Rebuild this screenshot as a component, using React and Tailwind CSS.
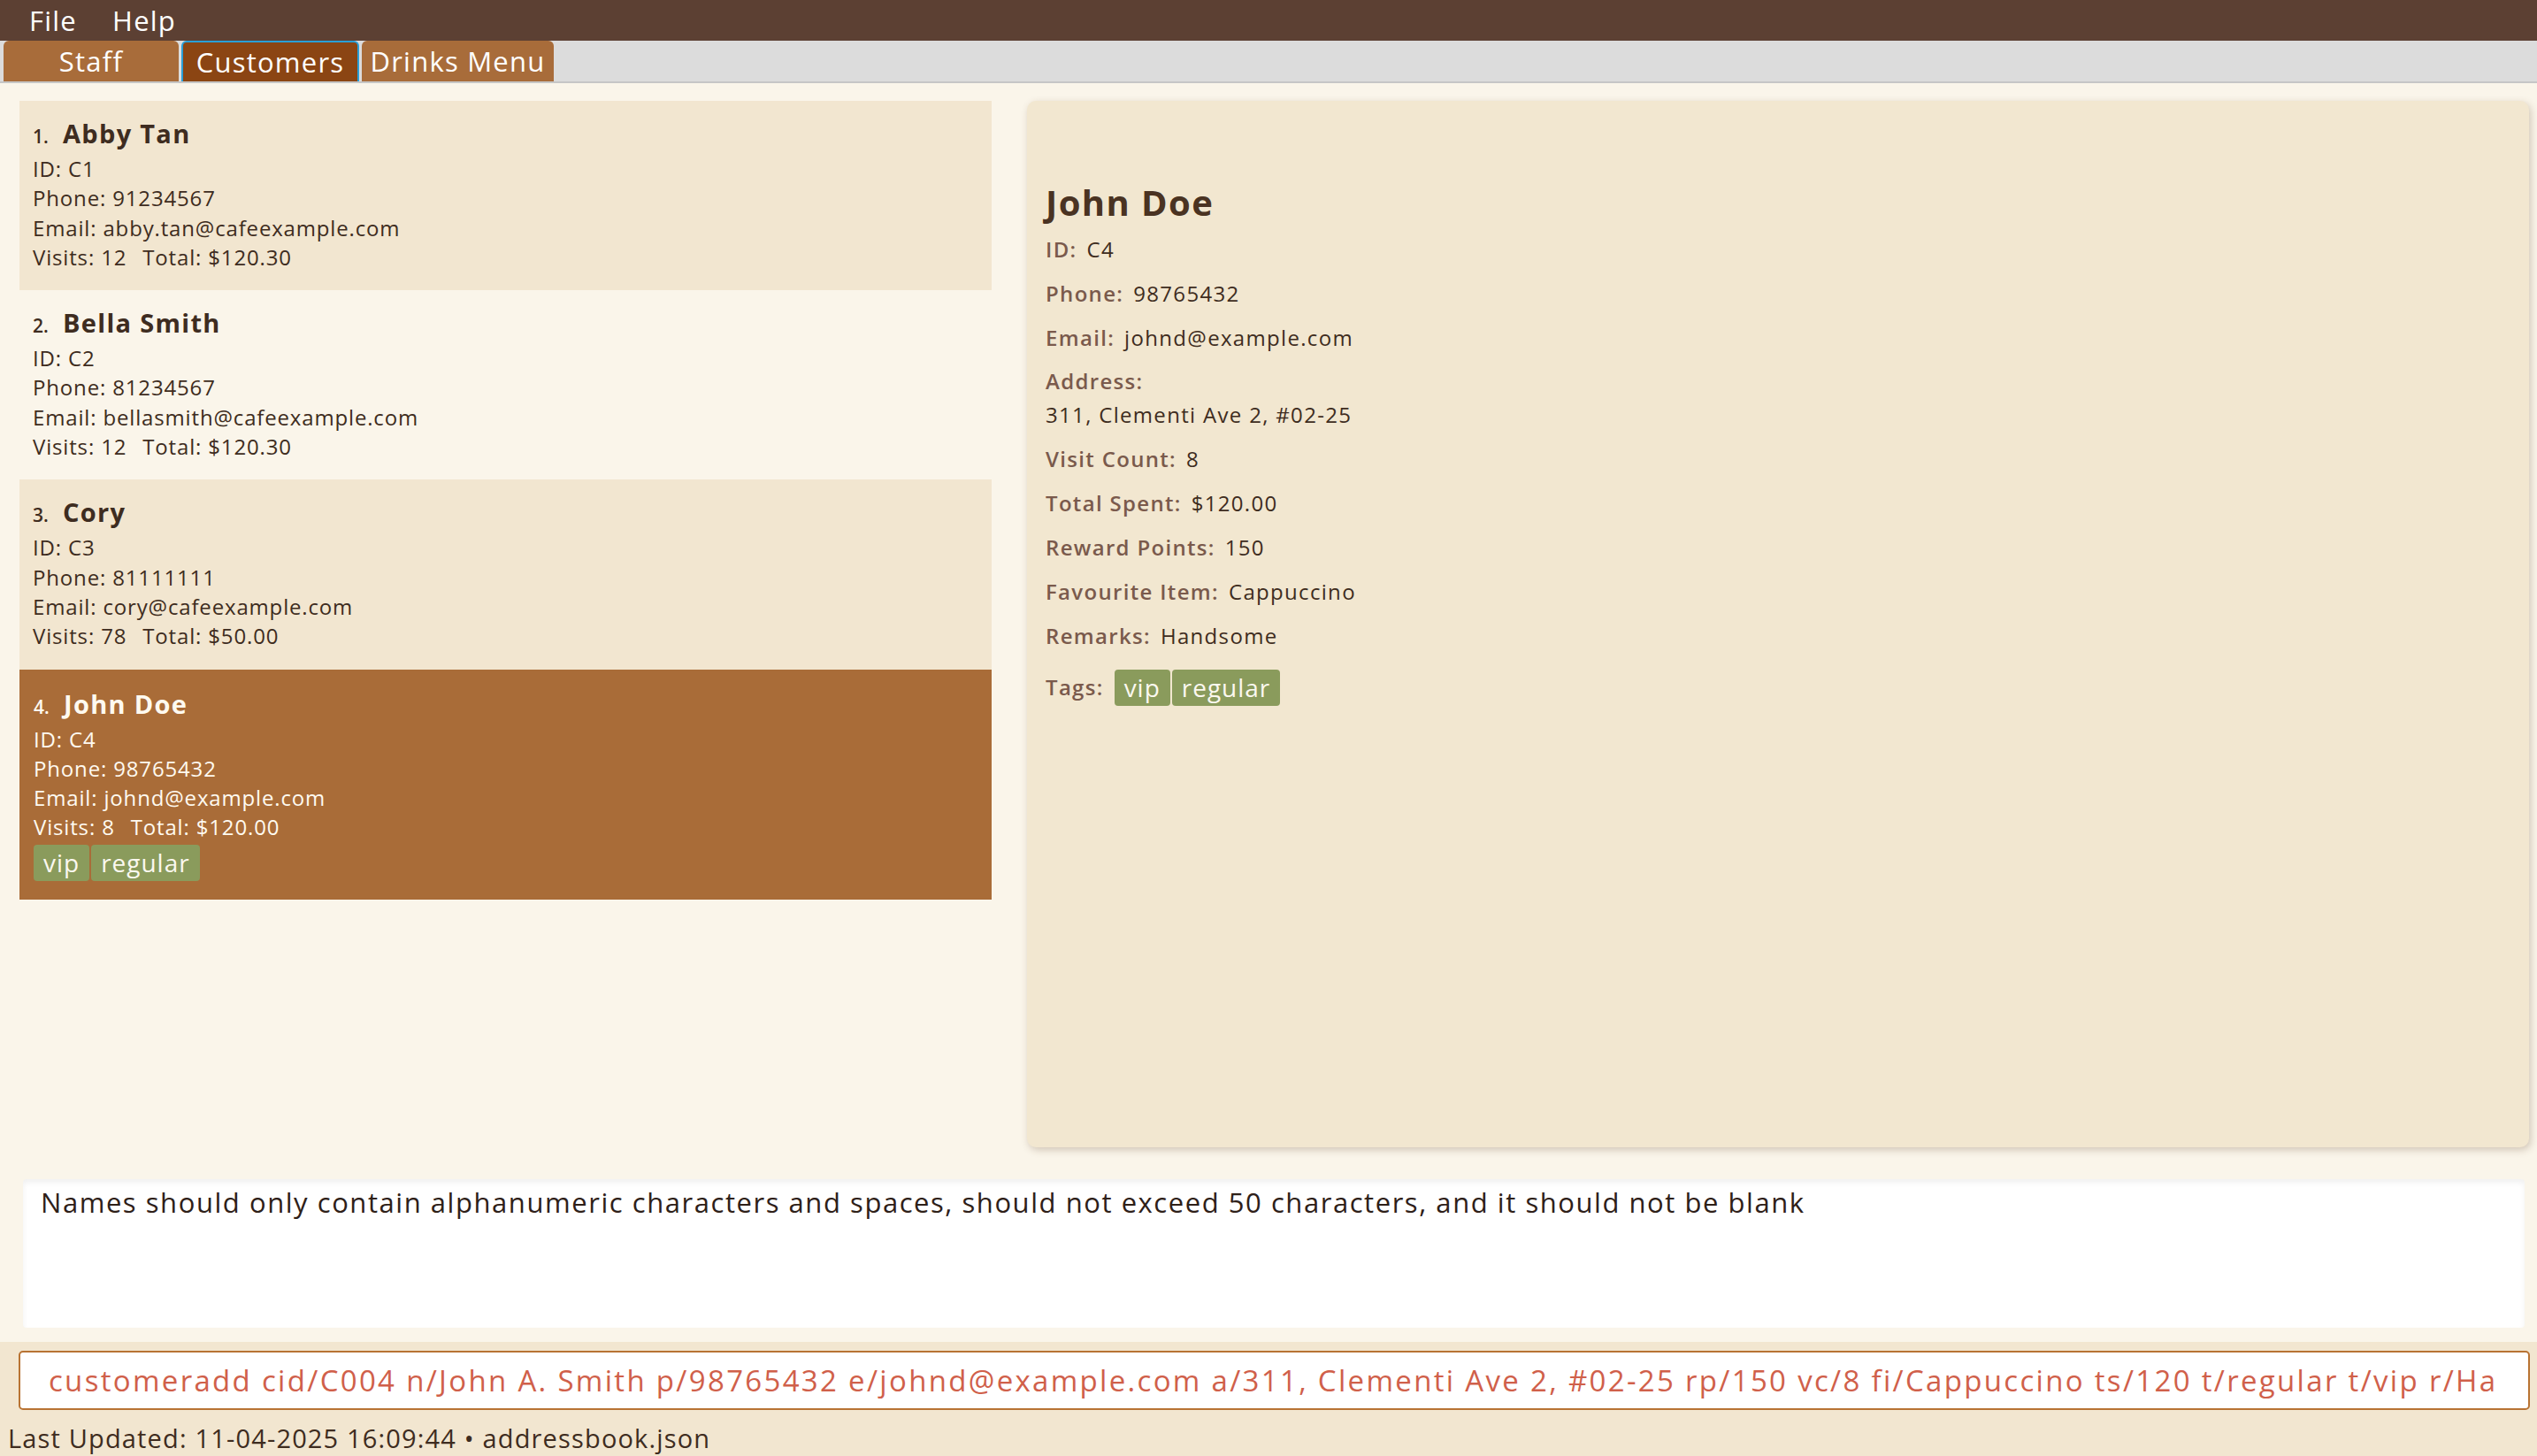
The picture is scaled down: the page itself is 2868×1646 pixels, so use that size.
const customers = [
  { no: 1, name: 'Abby Tan', id: 'C1', phone: '91234567', email: 'abby.tan@cafeexample.com', visits: 12, total: '120.30', tags: [] },
  { no: 2, name: 'Bella Smith', id: 'C2', phone: '81234567', email: 'bellasmith@cafeexample.com', visits: 12, total: '120.30', tags: [] },
  { no: 3, name: 'Cory', id: 'C3', phone: '81111111', email: 'cory@cafeexample.com', visits: 78, total: '50.00', tags: [] },
  { no: 4, name: 'John Doe', id: 'C4', phone: '98765432', email: 'johnd@example.com', visits: 8, total: '120.00', tags: ['vip', 'regular'] },
];

const selectedIndex = 3;

function Tag({ label }) {
  return (
    <span className="h-[41px] px-[11px] flex items-center rounded-[4px] bg-[#8a9b5c] text-[#fbf8ef] text-[28px] tracking-[0.035em] leading-none">
      {label}
    </span>
  );
}

function CustomerCard({ c, index }) {
  const selected = index === selectedIndex;
  const bg = selected ? 'bg-[#a96c38]' : index % 2 === 0 ? 'bg-[#f2e6d0]' : 'bg-[#faf5ea]';
  const text = selected ? 'text-[#fffaf0]' : 'text-[#3e2c20]';
  return (
    <div className={`${bg} ${text} ${selected ? 'px-[16px] pt-[21px] pb-[21px]' : 'px-[15px] pt-[19px] pb-[21px]'}`}>
      <div className="flex items-baseline leading-[36px]">
        <span className="text-[21px] font-semibold w-[34px]">{c.no}.</span>
        <span className="text-[29px] font-bold tracking-[0.045em]">{c.name}</span>
      </div>
      <div className="mt-[2px] text-[24px] leading-[33.3px] tracking-[0.035em]">
        <div>ID: {c.id}</div>
        <div>Phone: {c.phone}</div>
        <div>Email: {c.email}</div>
        <div>
          Visits: {c.visits}
          <span className="ml-[18px]">Total: ${c.total}</span>
        </div>
      </div>
      {c.tags.length > 0 && (
        <div className="mt-[3px] flex gap-[2px]">
          {c.tags.map((t) => (
            <Tag key={t} label={t} />
          ))}
        </div>
      )}
    </div>
  );
}

function DetailRow({ label, value }) {
  return (
    <div className="leading-[50px] text-[24px] tracking-[0.055em]">
      <span className="font-semibold text-[#7a5a4c]">{label}</span>
      <span className="ml-[11px] text-[#3e2c20]">{value}</span>
    </div>
  );
}

export default function App() {
  const c = customers[selectedIndex];
  return (
    <div
      className="w-[2868px] h-[1646px] flex flex-col bg-[#faf5ea] overflow-hidden"
      style={{ fontFamily: '"Open Sans", "Liberation Sans", sans-serif' }}
    >
      {/* menu bar */}
      <div className="shrink-0 h-[46px] bg-[#5c4033] flex items-center pl-[33px] gap-[40px] text-white text-[31px] tracking-[0.04em] leading-none">
        <span>File</span>
        <span>Help</span>
      </div>

      {/* tabs */}
      <div className="shrink-0 h-[48px] bg-[#dcdcdc] border-b-[2px] border-[#c6c6c6] flex items-stretch gap-[3px] pl-[4px] text-[31px] tracking-[0.04em] text-white">
        <div className="w-[198px] rounded-t-[6px] bg-[#a86c3a] flex items-center justify-center">
          Staff
        </div>
        <div className="w-[201px] rounded-t-[6px] bg-[#8b4513] border-[2px] border-b-0 border-[#2a9fd6] flex items-center justify-center">
          Customers
        </div>
        <div className="w-[217px] rounded-t-[6px] bg-[#a86c3a] flex items-center justify-center">
          Drinks Menu
        </div>
      </div>

      {/* main content */}
      <div className="shrink-0 flex pt-[20px] pl-[22px] pr-[9px] gap-[40px] h-[1203px]">
        <div className="w-[1099px] flex flex-col">
          {customers.map((cu, i) => (
            <CustomerCard key={cu.id} c={cu} index={i} />
          ))}
        </div>

        <div className="flex-1 rounded-[10px] bg-[#f2e7d0] shadow-[2px_3px_8px_rgba(90,60,30,0.25)] pl-[21px] pt-[91px]">
          <div className="text-[40px] font-bold leading-[48px] tracking-[0.035em] text-[#4a3322]">{c.name}</div>
          <div className="mt-[4px]">
            <DetailRow label="ID:" value={c.id} />
            <DetailRow label="Phone:" value={c.phone} />
            <DetailRow label="Email:" value={c.email} />
            <div className="mt-[5px] text-[24px] leading-[38px] tracking-[0.055em] font-semibold text-[#7a5a4c]">Address:</div>
            <div className="text-[24px] leading-[38px] tracking-[0.055em] text-[#3e2c20]">311, Clementi Ave 2, #02-25</div>
            <div className="mt-[6px]">
              <DetailRow label="Visit Count:" value="8" />
            </div>
            <DetailRow label="Total Spent:" value="$120.00" />
            <DetailRow label="Reward Points:" value="150" />
            <DetailRow label="Favourite Item:" value="Cappuccino" />
            <DetailRow label="Remarks:" value="Handsome" />
            <div className="mt-[8px] flex items-center h-[50px] gap-[12px] text-[24px] tracking-[0.055em]">
              <span className="font-semibold text-[#7a5a4c]">Tags:</span>
              <div className="flex gap-[2px]">
                {c.tags.map((t) => (
                  <Tag key={t} label={t} />
                ))}
              </div>
            </div>
          </div>
        </div>
      </div>

      {/* result display */}
      <div className="shrink-0 px-[26px] pr-[14px] pt-[36px] pb-[16px]">
        <div className="h-[168px] bg-white rounded-[4px] shadow-[inset_0_4px_6px_rgba(0,0,0,0.06)] px-[20px] pt-[3px] text-[31px] tracking-[0.05em] text-[#2e2018]">
          Names should only contain alphanumeric characters and spaces, should not exceed 50 characters, and it should not be blank
        </div>
      </div>

      {/* command box + status */}
      <div className="flex-1 min-h-0 bg-[#f2e6d0] pt-[10px] pl-[21px] pr-[8px]">
        <div className="h-[67px] bg-white border-[2px] border-[#b87333] rounded-[5px] flex items-center pl-[32px] overflow-hidden whitespace-nowrap text-[33px] tracking-[0.07em] text-[#d0604a]">
          customeradd cid/C004 n/John A. Smith p/98765432 e/johnd@example.com a/311, Clementi Ave 2, #02-25 rp/150 vc/8 fi/Cappuccino ts/120 t/regular t/vip r/Ha
        </div>
        <div className="-ml-[12px] mt-[17px] text-[29px] leading-[30px] tracking-[0.04em] text-[#3e2c20]">
          Last Updated: 11-04-2025 16:09:44 • addressbook.json
        </div>
      </div>
    </div>
  );
}
